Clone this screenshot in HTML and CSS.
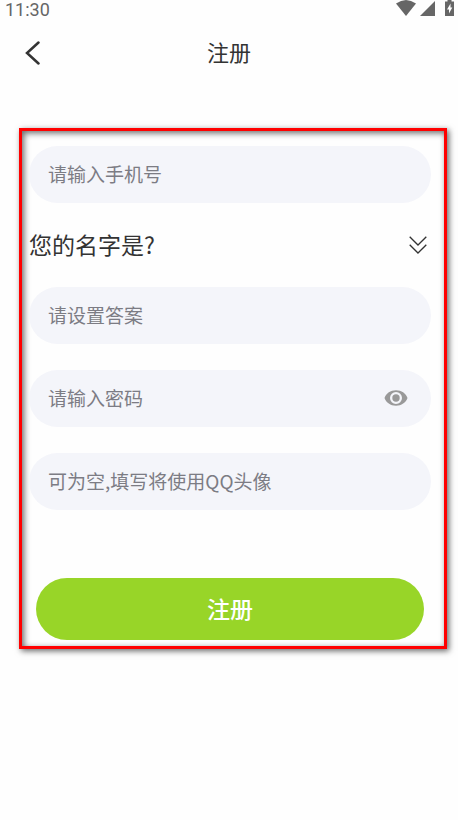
FILE: index.html
```html
<!DOCTYPE html>
<html lang="zh-CN">
<head>
<meta charset="utf-8">
<meta name="viewport" content="width=device-width, initial-scale=1">
<title>注册</title>
<link rel="stylesheet" href="styles.css">
</head>
<body>
<div class="status">
  <time class="clock">11:30</time>
  <div class="status-icons">
    <svg width="20" height="16" viewBox="0 0 20 16" aria-hidden="true"><path d="M0 3.500Q10-3.500 20 3.500L10 16Z"/></svg>
    <svg width="15" height="16" viewBox="0 0 15 16" aria-hidden="true"><path d="M15 1V16H0Z"/></svg>
    <svg class="battery" width="9" height="16" viewBox="0 0 9 16" aria-hidden="true"><path fill-rule="evenodd" d="M2.500 0h4v1.500H9V16H0V1.500h2.500ZM5.500 3.500L2 9.500h2v4L7.300 7.500h-1.800Z"/></svg>
  </div>
</div>
<header class="bar">
  <button class="back" type="button" aria-label="返回">
    <svg width="16" height="24" viewBox="0 0 16 24" aria-hidden="true"><path d="M14.500 1.500L3 12L14.500 22.500"/></svg>
  </button>
  <h1 class="title">注册</h1>
</header>
<main class="page">
  <form class="form">
    <input class="field" type="tel" placeholder="请输入手机号" aria-label="手机号">
    <div class="question">
      <select class="question-select" aria-label="密保问题">
        <option>您的名字是?</option>
      </select>
      <svg class="chevrons" width="18" height="18" viewBox="0 0 18 18" aria-hidden="true"><path d="M.7 .7L9 9L17.300 .7M.7 8.700L9 17L17.300 8.700"/></svg>
    </div>
    <div class="stack">
      <input class="field" type="text" placeholder="请设置答案" aria-label="答案">
      <div class="field password">
        <input class="password-input" type="password" placeholder="请输入密码" aria-label="密码">
        <button class="eye" type="button" aria-label="显示密码">
          <svg width="24" height="16" viewBox="0 0 24 16" aria-hidden="true"><path fill-rule="evenodd" d="M12 .3C6.500 .3 2.200 3.300 .5 8C2.200 12.700 6.500 15.700 12 15.700S21.800 12.700 23.500 8C21.800 3.300 17.500 .3 12 .3ZM12 2A6 6 0 1 1 12 14A6 6 0 1 1 12 2Z"/><circle cx="12" cy="8" r="3.700"/></svg>
        </button>
      </div>
      <input class="field" type="text" placeholder="可为空,填写将使用QQ头像" aria-label="QQ号">
    </div>
    <button class="submit" type="submit">注册</button>
  </form>
</main>
</body>
</html>
```
FILE: styles.css
```css
* {
  box-sizing: border-box;
}

body {
  min-height: 100vh;
  margin: 0;
  background: #fefefe;
  color: #333;
  font-family: Roboto, "Noto Sans CJK SC", sans-serif;
}

button,
input,
select {
  margin: 0;
  padding: 0;
  border: 0;
  background: none;
  color: inherit;
  font-family: "Noto Sans CJK SC", sans-serif;
}

svg {
  display: block;
}

.status {
  display: flex;
  justify-content: space-between;
  height: 24px;
  padding: 0 4px 0 5px;
  color: #666;
}

.clock {
  font-size: 18px;
  line-height: 20px;
}

.status-icons {
  display: flex;
  gap: 4px;
  fill: #666;
}

.battery {
  margin-left: 6px;
}

.bar {
  display: grid;
  grid-template-columns: 48px 1fr 48px;
  align-items: center;
  height: 58px;
}

.back {
  justify-self: end;
  padding: 4px 8px;
}

.back path {
  fill: none;
  stroke: #333;
  stroke-width: 2.5;
  stroke-linecap: round;
}

.title {
  margin: 0;
  padding-top: 2px;
  font-size: 22px;
  font-weight: 400;
  line-height: 32px;
  text-align: center;
}

.page {
  padding: 46px 11px 24px 19px;
}

.form {
  padding: 15px 13px 6px 7px;
  border: 3px solid #f00;
  box-shadow: 2px 2px 6px rgba(0, 0, 0, .6), inset 2px 2px 6px rgba(0, 0, 0, .6);
}

.field {
  display: block;
  width: 100%;
  height: 57px;
  padding: 0 19px 2px;
  border-radius: 29px;
  background: #f4f5fa;
  font-size: 19px;
}

::placeholder {
  color: #7c7c84;
  opacity: 1;
}

.question {
  display: grid;
  align-items: center;
  height: 84px;
}

.question-select {
  grid-area: 1 / 1;
  width: 100%;
  height: 48px;
  padding-bottom: 2px;
  appearance: none;
  font-size: 23px;
}

.chevrons {
  grid-area: 1 / 1;
  justify-self: end;
  margin-right: 4px;
  fill: none;
  stroke: #333;
  stroke-width: 1.3;
  pointer-events: none;
}

.stack {
  display: grid;
  gap: 26px;
}

.password {
  display: flex;
  align-items: center;
}

.password-input {
  flex: 1;
  min-width: 0;
  height: 100%;
  font-size: 19px;
}

.eye {
  padding: 4px;
  fill: #999;
}

.submit {
  display: block;
  width: calc(100% - 14px);
  height: 62px;
  margin: 68px auto 0;
  padding-bottom: 2px;
  border-radius: 31px;
  background: #98d528;
  color: #fff;
  font-size: 23px;
  font-weight: 500;
}
```
